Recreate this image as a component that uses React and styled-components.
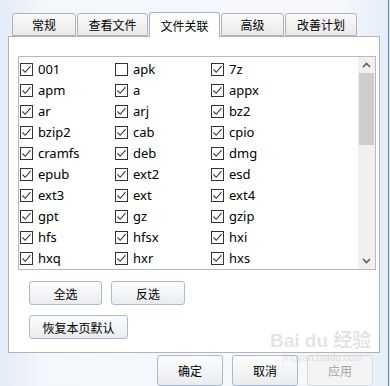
import React from "react";
import styled, { createGlobalStyle } from "styled-components";

const GlobalStyle = createGlobalStyle`
  html, body {
    margin: 0;
    padding: 0;
    background: #eef3fa;
  }
  * {
    box-sizing: border-box;
  }
`;

const Window = styled.div`
  position: relative;
  width: 390px;
  height: 386px;
  overflow: hidden;
  background: linear-gradient(to right, #e2ebf7 0px, #f3f6fb 40px, #f6f8fc 340px, #e4edf8 386px);
  font-family: "Noto Sans CJK SC", "Noto Sans", sans-serif;
  color: #000;
  display: flex;
  flex-direction: column;
  padding: 12px 0 0 8px;
`;

const EdgeLine = styled.div`
  position: absolute;
  top: 0;
  bottom: 0;
  right: 1px;
  width: 1px;
  background: #5a86b8;
`;

const TabBar = styled.div`
  display: flex;
  align-items: flex-end;
  height: 24px;
  padding-left: 4px;
  gap: 1px;
  position: relative;
  z-index: 1;
`;

const Tab = styled.div`
  width: ${(p) => p.$w}px;
  height: ${(p) => (p.$active ? 25 : 23)}px;
  margin-bottom: ${(p) => (p.$active ? -1 : 0)}px;
  display: flex;
  align-items: center;
  justify-content: center;
  font-size: 12px;
  border: 1px solid ${(p) => (p.$active ? "#a3b5c8" : "#b2b2b2")};
  border-bottom: ${(p) => (p.$active ? "none" : "1px solid #b2b2b2")};
  border-radius: 3px 3px 0 0;
  background: ${(p) => (p.$active ? "#fff" : "linear-gradient(#fafafa, #e9e9e9)")};
`;

const Panel = styled.div`
  width: 372px;
  height: 317px;
  background: #fff;
  border: 1px solid #b4b4b4;
  padding: 19px 3px 0 9px;
  display: flex;
  flex-direction: column;
`;

const ListBox = styled.div`
  height: 214px;
  border: 1px solid #b9b9b9;
  display: flex;
`;

const Grid = styled.div`
  flex: 1;
  display: grid;
  grid-template-columns: 95px 96px 1fr;
  grid-auto-rows: 21px;
  padding: 2px 0 0 1px;
`;

const Item = styled.label`
  display: flex;
  align-items: center;
  gap: 5px;
  font-family: "Noto Sans", "Noto Sans CJK SC", sans-serif;
  font-size: 13px;
  line-height: 1;
  padding-bottom: 1px;
`;

const Box = styled.span`
  width: 13px;
  height: 13px;
  border: 1px solid #333;
  background: #fff;
  display: flex;
  align-items: center;
  justify-content: center;
  flex-shrink: 0;
`;

const ScrollBar = styled.div`
  width: 17px;
  background: #f0f0f0;
  display: flex;
  flex-direction: column;
  align-items: center;
`;

const Arrow = styled.div`
  height: 16px;
  width: 100%;
  display: flex;
  align-items: center;
  justify-content: center;
`;

const Thumb = styled.div`
  width: 15px;
  height: 72px;
  background: #cdcdcd;
  margin-bottom: auto;
`;

const ButtonRow = styled.div`
  display: flex;
  gap: 9px;
  padding-left: 11px;
  margin-top: ${(p) => p.$top}px;
`;

const Button = styled.div`
  width: ${(p) => p.$w}px;
  height: ${(p) => p.$h || 24}px;
  display: flex;
  align-items: center;
  justify-content: center;
  font-size: 12px;
  color: ${(p) => (p.$disabled ? "#a3a3a3" : "#000")};
  border: 1px solid ${(p) => (p.$disabled ? "#d3dbe3" : "#a8bbcf")};
  border-radius: 3px;
  background: ${(p) => (p.$disabled ? "#f4f4f4" : "linear-gradient(#fdfdfd, #e9ecef)")};
`;

const Footer = styled.div`
  display: flex;
  justify-content: flex-end;
  gap: 9px;
  padding-right: 17px;
  margin-top: 2px;
`;

const Watermark = styled.div`
  position: absolute;
  left: 270px;
  top: 330px;
  color: rgba(160, 160, 160, 0.3);
  font-family: "Liberation Sans", "Noto Sans CJK SC", sans-serif;
  white-space: nowrap;
  pointer-events: none;
`;

const WmBig = styled.div`
  font-size: 19px;
  font-weight: bold;
  line-height: 22px;
`;

const WmSmall = styled.div`
  font-size: 10px;
  line-height: 12px;
  margin-left: 12px;
`;

const tabs = [
  { t: "常规", w: 64 },
  { t: "查看文件", w: 71 },
  { t: "文件关联", w: 71, active: true },
  { t: "高级", w: 63 },
  { t: "改善计划", w: 72 },
];

const items = [
  ["001", true], ["apk", false], ["7z", true],
  ["apm", true], ["a", true], ["appx", true],
  ["ar", true], ["arj", true], ["bz2", true],
  ["bzip2", true], ["cab", true], ["cpio", true],
  ["cramfs", true], ["deb", true], ["dmg", true],
  ["epub", true], ["ext2", true], ["esd", true],
  ["ext3", true], ["ext", true], ["ext4", true],
  ["gpt", true], ["gz", true], ["gzip", true],
  ["hfs", true], ["hfsx", true], ["hxi", true],
  ["hxq", true], ["hxr", true], ["hxs", true],
];

const Check = () => (
  <svg width="11" height="11" viewBox="0 0 11 11">
    <path d="M1.5 5.5 L4.2 8.3 L9.5 2.2" fill="none" stroke="#333" strokeWidth="1.1" />
  </svg>
);

const App = () => {
  return (
    <Window>
      <GlobalStyle />
      <TabBar>
        {tabs.map((tab) => (
          <Tab key={tab.t} $w={tab.w} $active={tab.active}>
            {tab.t}
          </Tab>
        ))}
      </TabBar>
      <Panel>
        <ListBox>
          <Grid>
            {items.map(([name, on]) => (
              <Item key={name}>
                <Box>{on && <Check />}</Box>
                {name}
              </Item>
            ))}
          </Grid>
          <ScrollBar>
            <Arrow>
              <svg width="9" height="6" viewBox="0 0 9 6">
                <path d="M1 5 L4.5 1.5 L8 5" fill="none" stroke="#606060" strokeWidth="1.6" />
              </svg>
            </Arrow>
            <Thumb />
            <Arrow>
              <svg width="9" height="6" viewBox="0 0 9 6">
                <path d="M1 1 L4.5 4.5 L8 1" fill="none" stroke="#606060" strokeWidth="1.6" />
              </svg>
            </Arrow>
          </ScrollBar>
        </ListBox>
        <ButtonRow $top={11}>
          <Button $w={73}>全选</Button>
          <Button $w={74}>反选</Button>
        </ButtonRow>
        <ButtonRow $top={10}>
          <Button $w={99}>恢复本页默认</Button>
        </ButtonRow>
      </Panel>
      <Footer>
        <Button $w={66} $h={31}>确定</Button>
        <Button $w={66} $h={31}>取消</Button>
        <Button $w={66} $h={31} $disabled>应用</Button>
      </Footer>
      <Watermark>
        <WmBig>Bai du 经验</WmBig>
        <WmSmall>jingyan.baidu.com</WmSmall>
      </Watermark>
      <EdgeLine />
    </Window>
  );
};

export default App;
